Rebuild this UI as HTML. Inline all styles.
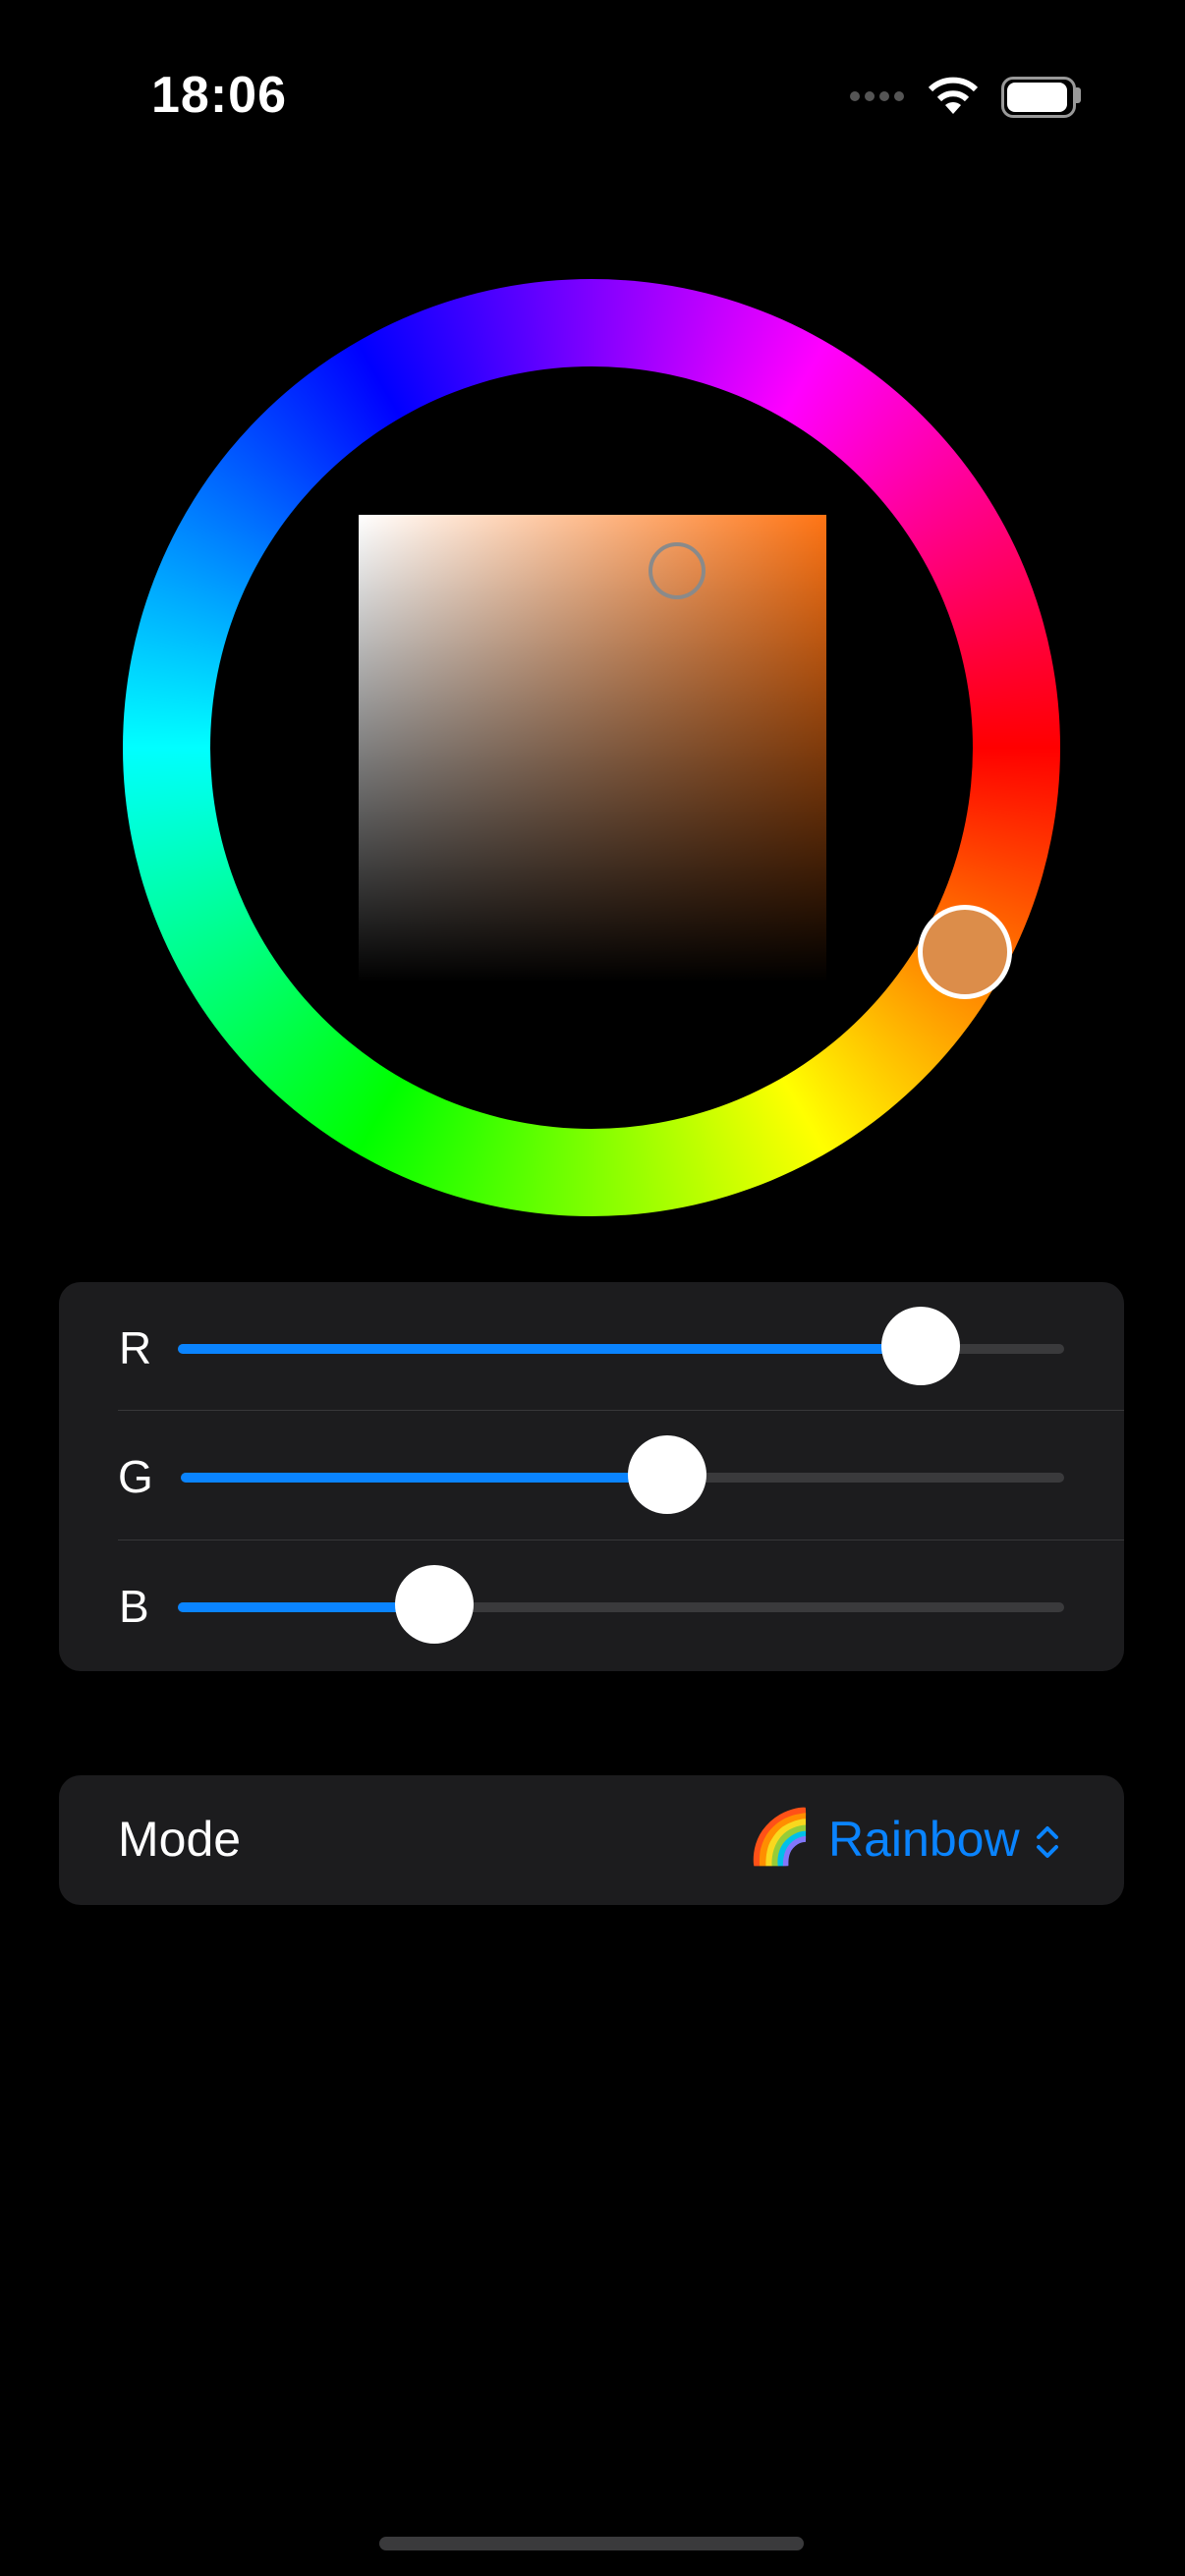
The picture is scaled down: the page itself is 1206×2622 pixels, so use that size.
<!DOCTYPE html>
<html><head><meta charset="utf-8"><style>
html,body{margin:0;padding:0;background:#000;}
body{width:1206px;height:2622px;position:relative;overflow:hidden;font-family:"Liberation Sans",sans-serif;color:#fff;}
.abs{position:absolute;}
.time{left:154px;top:67px;font-size:52px;font-weight:bold;letter-spacing:1px;}
.ring{left:125px;top:284px;width:954px;height:954px;border-radius:50%;
background:conic-gradient(from 90deg,#f00,#ff0 60deg,#0f0 120deg,#0ff 180deg,#00f 240deg,#f0f 300deg,#f00 360deg);}
.hole{left:214px;top:373px;width:776px;height:776px;border-radius:50%;background:#000;}
.sq{left:365px;top:524px;width:476px;height:476px;
background:linear-gradient(to bottom,rgba(0,0,0,0),#000),linear-gradient(to right,#fff,#ff7414);}
.panel{left:60px;width:1084px;background:#1c1c1e;border-radius:22px;}
.lbl{font-size:46px;}
.track{height:10px;border-radius:5px;background:#3a3a3c;}
.fill{height:10px;border-radius:5px;background:#0a84ff;}
.thumb{width:80px;height:80px;border-radius:50%;background:#fff;}
.sep{left:120px;width:1024px;height:1px;background:#38383a;}
</style></head><body>
<div class="abs time">18:06</div>
<div class="abs" style="left:865px;top:93px;">
 <div class="abs" style="left:0;width:10px;height:10px;border-radius:50%;background:#555"></div>
 <div class="abs" style="left:15px;width:10px;height:10px;border-radius:50%;background:#555"></div>
 <div class="abs" style="left:30px;width:10px;height:10px;border-radius:50%;background:#555"></div>
 <div class="abs" style="left:45px;width:10px;height:10px;border-radius:50%;background:#555"></div>
</div>
<svg class="abs" style="left:942px;top:76px" width="56" height="42" viewBox="0 0 56 42">
<path d="M28 40 L20 31 A12 12 0 0 1 36 31 Z" fill="#fff"/>
<path d="M14 25 A20 20 0 0 1 42 25" stroke="#fff" stroke-width="6" fill="none"/>
<path d="M5 15 A33 33 0 0 1 51 15" stroke="#fff" stroke-width="6" fill="none"/>
</svg>
<div class="abs" style="left:1019px;top:78px;width:70px;height:36px;border:3px solid #999;border-radius:12px;"></div>
<div class="abs" style="left:1025px;top:84px;width:61px;height:30px;background:#fff;border-radius:8px;"></div>
<div class="abs" style="left:1095px;top:89px;width:5px;height:16px;background:#999;border-radius:0 3px 3px 0;"></div>

<div class="abs ring"></div>
<div class="abs hole"></div>
<div class="abs sq"></div>
<div class="abs" style="left:660px;top:552px;width:58px;height:58px;border:4px solid #8a8a8a;border-radius:50%;box-sizing:border-box;"></div>
<div class="abs" style="left:934px;top:921px;width:96px;height:96px;border:5px solid #fff;border-radius:50%;background:#dc8d4a;box-sizing:border-box;"></div>

<div class="abs panel" style="top:1305px;height:396px;"></div>
<div class="abs lbl" style="left:121px;top:1345px;">R</div>
<div class="abs track" style="left:181px;top:1368px;width:902px;"></div>
<div class="abs fill" style="left:181px;top:1368px;width:756px;"></div>
<div class="abs thumb" style="left:897px;top:1330px;"></div>
<div class="abs sep" style="top:1435px;"></div>
<div class="abs lbl" style="left:120px;top:1476px;">G</div>
<div class="abs track" style="left:184px;top:1499px;width:899px;"></div>
<div class="abs fill" style="left:184px;top:1499px;width:495px;"></div>
<div class="abs thumb" style="left:639px;top:1461px;"></div>
<div class="abs sep" style="top:1567px;"></div>
<div class="abs lbl" style="left:121px;top:1608px;">B</div>
<div class="abs track" style="left:181px;top:1631px;width:902px;"></div>
<div class="abs fill" style="left:181px;top:1631px;width:261px;"></div>
<div class="abs thumb" style="left:402px;top:1593px;"></div>

<div class="abs panel" style="top:1807px;height:132px;"></div>
<div class="abs lbl" style="left:120px;top:1843px;font-size:50px;">Mode</div>
<div class="abs" style="left:760px;top:1839px;font-size:54px;font-family:'Noto Color Emoji','DejaVu Sans',sans-serif;">🌈</div>
<div class="abs lbl" style="left:843px;top:1843px;color:#0a84ff;font-size:50px;">Rainbow</div>
<svg class="abs" style="left:1053px;top:1857px" width="26" height="36" viewBox="0 0 26 36">
<path d="M4 13 L13 4 L22 13 M4 23 L13 32 L22 23" stroke="#0a84ff" stroke-width="4" fill="none" stroke-linecap="round" stroke-linejoin="round"/>
</svg>

<div class="abs" style="left:386px;top:2582px;width:432px;height:14px;border-radius:7px;background:#3a3a3c;"></div>
</body></html>
